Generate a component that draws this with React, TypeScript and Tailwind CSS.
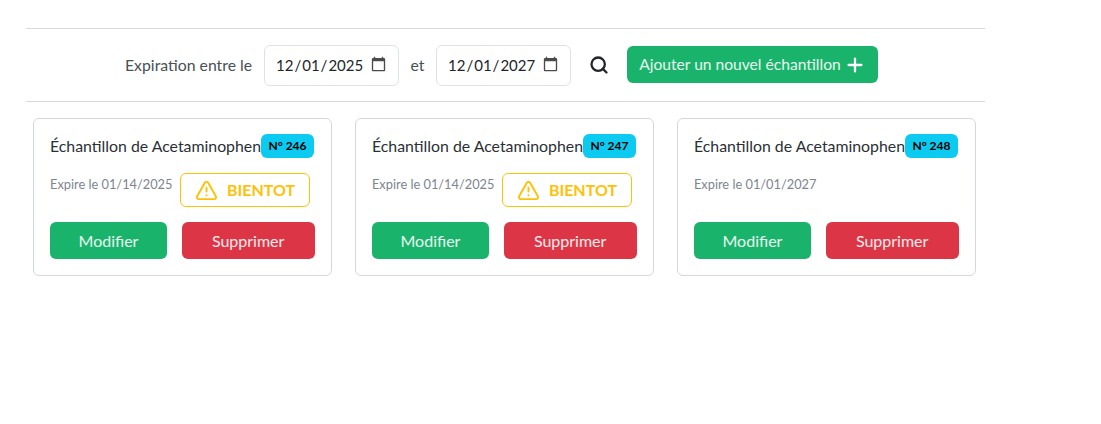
import { Search, Plus, TriangleAlert } from "lucide-react";

const samples = [
  { id: 246, expires: "01/14/2025", soon: true },
  { id: 247, expires: "01/14/2025", soon: true },
  { id: 248, expires: "01/01/2027", soon: false },
];

function SampleCard({ sample }: { sample: (typeof samples)[number] }) {
  return (
    <div className="w-[298.67px] h-[158px] bg-white border border-[#d5d7da] rounded-md px-4 pt-[15px]">
      <div className="flex items-center h-[24px]">
        <span className="text-[#2b3035] text-[15.85px] w-[211px] whitespace-nowrap">Échantillon de Acetaminophen</span>
        <span className="bg-[#0dcaf0] text-black text-[12px] font-bold rounded-md w-[53px] h-[24px] flex items-center justify-center">
          N° {sample.id}
        </span>
      </div>
      <div className="flex items-start h-[34px] mt-[15px]">
        <span className="text-[#7d8590] text-[12.8px] leading-[21px] pt-[1px] w-[130px] whitespace-nowrap">
          Expire le {sample.expires}
        </span>
        {sample.soon && (
          <div className="border border-[#ffc107] rounded-md w-[130px] h-[34px] flex items-center justify-center gap-[9px] text-[#ffc107] font-bold text-[16px]">
            <TriangleAlert size={23} strokeWidth={2} />
            BIENTOT
          </div>
        )}
      </div>
      <div className="flex justify-between mt-[15px]">
        <button className="w-[117px] h-[37px] bg-[#19b36b] text-white/90 rounded-md text-[16px]">Modifier</button>
        <button className="w-[133px] h-[37px] bg-[#dc3545] text-white/90 rounded-md text-[16px]">Supprimer</button>
      </div>
    </div>
  );
}

function DateField({ value }: { value: string }) {
  return (
    <input
      type="date"
      defaultValue={value}
      className="w-[135px] h-[41px] bg-white border border-[#dee2e6] rounded-md pl-[10px] pr-[11px] text-[15px] text-[#212529] [&::-webkit-calendar-picker-indicator]:opacity-70 [&::-webkit-calendar-picker-indicator]:ml-0 [&::-webkit-calendar-picker-indicator]:p-0 [&::-webkit-calendar-picker-indicator]:w-[17px] [&::-webkit-calendar-picker-indicator]:h-[19px]"
    />
  );
}

export default function App() {
  return (
    <div className="w-[1101px] h-[424px] bg-white pt-[28px] pl-[26px] font-['Lato',sans-serif]">
      <div className="w-[959px]">
        <div className="h-[74px] border-y border-[#d9d9d9] flex items-center pl-[99px] text-[#495057]">
          <span className="text-[15.8px] w-[139px] whitespace-nowrap">Expiration entre le</span>
          <DateField value="2025-12-01" />
          <span className="text-[15.8px] w-[37px] text-center">et</span>
          <DateField value="2027-12-01" />
          <Search size={20} strokeWidth={2.75} className="text-[#212529] ml-[18px] mr-[18px]" />
          <button className="h-[37px] w-[251px] mb-[2px] pt-[1px] bg-[#19b36b] text-white/90 rounded-md text-[15.6px] flex items-center justify-center gap-[3px]">
            Ajouter un nouvel échantillon
            <Plus size={22} strokeWidth={2.5} className="text-white" />
          </button>
        </div>
        <div className="flex gap-[23.33px] pl-[7px] pt-[16px]">
          {samples.map((s) => (
            <SampleCard key={s.id} sample={s} />
          ))}
        </div>
      </div>
    </div>
  );
}
